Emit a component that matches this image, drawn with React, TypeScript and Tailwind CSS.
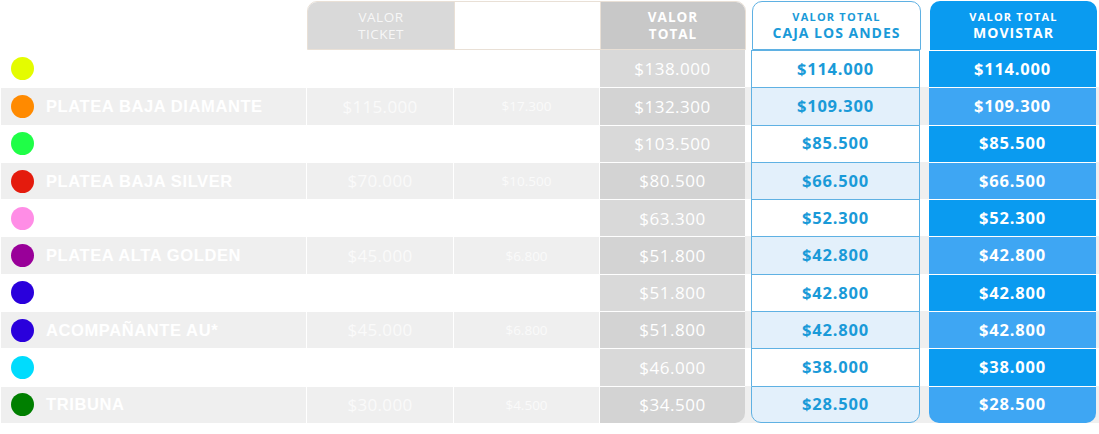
const rows = [
  { dot: "bg-[#e4fc00]", name: "", ticket: "", fee: "", total: "$138.000", caja: "$114.000", movi: "$114.000" },
  { dot: "bg-[#ff8a00]", name: "PLATEA BAJA DIAMANTE", ticket: "$115.000", fee: "$17.300", total: "$132.300", caja: "$109.300", movi: "$109.300" },
  { dot: "bg-[#1ffe47]", name: "", ticket: "", fee: "", total: "$103.500", caja: "$85.500", movi: "$85.500" },
  { dot: "bg-[#e41b0d]", name: "PLATEA BAJA SILVER", ticket: "$70.000", fee: "$10.500", total: "$80.500", caja: "$66.500", movi: "$66.500" },
  { dot: "bg-[#ff8de6]", name: "", ticket: "", fee: "", total: "$63.300", caja: "$52.300", movi: "$52.300" },
  { dot: "bg-[#990099]", name: "PLATEA ALTA GOLDEN", ticket: "$45.000", fee: "$6.800", total: "$51.800", caja: "$42.800", movi: "$42.800" },
  { dot: "bg-[#2a00dc]", name: "", ticket: "", fee: "", total: "$51.800", caja: "$42.800", movi: "$42.800" },
  { dot: "bg-[#2a00dc]", name: "ACOMPAÑANTE AU*", ticket: "$45.000", fee: "$6.800", total: "$51.800", caja: "$42.800", movi: "$42.800" },
  { dot: "bg-[#00dcfd]", name: "", ticket: "", fee: "", total: "$46.000", caja: "$38.000", movi: "$38.000" },
  { dot: "bg-[#007f00]", name: "TRIBUNA", ticket: "$30.000", fee: "$4.500", total: "$34.500", caja: "$28.500", movi: "$28.500" },
];

const num = "font-['Open_Sans',sans-serif]";

export default function App() {
  return (
    <div className="w-[1099px] h-[434px] bg-white overflow-hidden">
      {/* header */}
      <div className="flex h-[50px]">
        <div className="w-[307px]" />
        <div className="flex w-[439px] mt-[1px] border border-[#e9e0d6] rounded-t-[10px] overflow-hidden">
          <div className="w-[146px] bg-[#d9d9d9] flex flex-col items-center justify-center text-[13.5px] leading-[17px] tracking-[0.5px] text-[#f7f7f7] font-['Open_Sans',sans-serif]">
            <span>VALOR</span>
            <span>TICKET</span>
          </div>
          <div className="w-[147px] bg-white border-x border-[#e9e0d6]" />
          <div className="flex-1 bg-[#c8c8c8] flex flex-col items-center justify-center text-[13.5px] leading-[17px] tracking-[1px] font-bold text-white font-['Open_Sans',sans-serif]">
            <span>VALOR</span>
            <span>TOTAL</span>
          </div>
        </div>
        <div className="w-[6px]" />
        <div className="w-[169px] mt-[1px] border border-[#5fb1e3] rounded-t-[10px] bg-white flex flex-col items-center justify-center text-[#1a9ad8] font-bold font-['Open_Sans',sans-serif]">
          <span className="text-[11px] leading-[15px] tracking-[1.2px]">VALOR TOTAL</span>
          <span className="text-[14px] leading-[18px] tracking-[1px]">CAJA LOS ANDES</span>
        </div>
        <div className="w-[9px]" />
        <div className="w-[167px] mt-[1px] rounded-t-[10px] bg-[#0a9bf0] flex flex-col items-center justify-center text-white font-bold font-['Open_Sans',sans-serif]">
          <span className="text-[11px] leading-[15px] tracking-[1.2px]">VALOR TOTAL</span>
          <span className="text-[14px] leading-[18px] tracking-[1px]">MOVISTAR</span>
        </div>
      </div>

      {/* body */}
      {rows.map((r, i) => {
        const gray = i % 2 === 1;
        const last = i === rows.length - 1;
        const sep = i > 0 ? "border-t border-t-white" : "";
        return (
          <div key={i} className={`flex h-[37.3px] ml-[1px] ${gray ? "bg-[#efefef]" : "bg-white"}`}>
            <div className={`w-[305px] flex items-center ${sep}`}>
              <span className={`ml-[10px] w-[23px] h-[23px] rounded-full ${r.dot}`} />
              <span className="ml-[12px] text-[16.5px] font-bold tracking-[0.6px] text-white font-['Liberation_Sans',sans-serif]">
                {r.name}
              </span>
            </div>
            <div className={`w-[147px] border-l border-white flex items-center justify-center text-[17px] tracking-[0.3px] text-[#fafafa] ${num} ${sep}`}>
              {r.ticket}
            </div>
            <div className={`w-[146px] border-l border-white flex items-center justify-center text-[13.5px] text-[#fafafa] ${num} ${sep}`}>
              {r.fee}
            </div>
            <div
              className={`w-[146px] border-l border-white flex items-center justify-center text-[17px] tracking-[0.5px] text-white ${num} ${sep} ${
                gray ? "bg-[#d3d3d3]" : "bg-[#d9d9d9]"
              } ${last ? "rounded-br-[10px]" : ""}`}
            >
              {r.total}
            </div>
            <div className="w-[6px]" />
            <div
              className={`w-[169px] border-x border-t border-[#5fb1e3] flex items-center justify-center text-[16.5px] font-bold tracking-[0.8px] text-[#1a9ad8] ${num} ${
                gray ? "bg-[#e3f0fb]" : "bg-white"
              } ${last ? "rounded-b-[10px] border-b" : ""}`}
            >
              {r.caja}
            </div>
            <div className="w-[9px]" />
            <div
              className={`w-[167px] flex items-center justify-center text-[16.5px] font-bold tracking-[0.8px] text-white ${num} border-t border-t-white ${
                gray ? "bg-[#3ea6f3]" : "bg-[#0a9bf0]"
              } ${last ? "rounded-b-[10px]" : ""}`}
            >
              {r.movi}
            </div>
          </div>
        );
      })}
    </div>
  );
}
